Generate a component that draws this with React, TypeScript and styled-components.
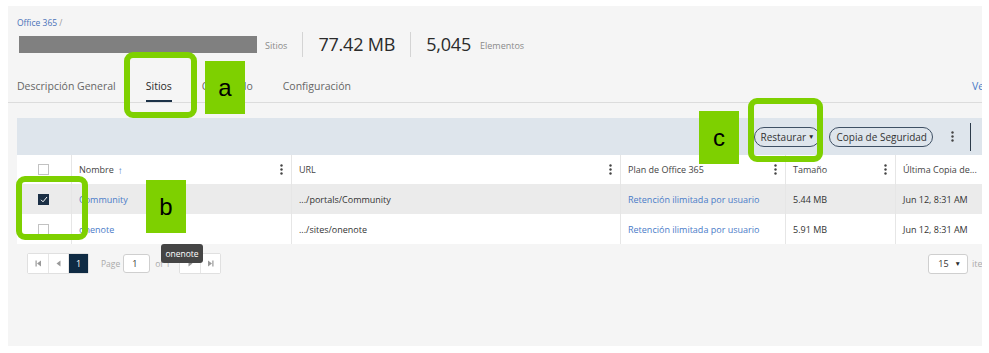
import React from "react";
import styled, { createGlobalStyle } from "styled-components";

const GlobalStyle = createGlobalStyle`
  html, body {
    margin: 0;
    padding: 0;
    background: #ffffff;
  }
  body {
    font-family: "Open Sans", "Noto Sans", Arial, sans-serif;
    color: #333;
  }
  * { box-sizing: border-box; }
`;

const green = "#7ed000";

const Page = styled.div`
  position: relative;
  width: 989px;
  height: 353px;
  padding: 6px 7px 7px 8px;
  overflow: hidden;
`;

const Panel = styled.div`
  height: 100%;
  background: #f5f5f5;
  overflow: hidden;
  padding-left: 9px;
`;

const Content = styled.div`
  width: 1030px;
`;

const Breadcrumb = styled.div`
  margin-top: 11px;
  font-size: 8.5px;
  line-height: 12px;
  color: #999;
  a {
    color: #4a72b8;
    text-decoration: none;
  }
`;

const TitleRow = styled.div`
  display: flex;
  align-items: center;
  height: 26px;
  margin-top: 2px;
`;

const Redacted = styled.div`
  width: 238px;
  height: 17px;
  margin-left: 2px;
  background: #808080;
`;

const SmallLabel = styled.span<{ $gap?: number }>`
  font-size: 9px;
  color: #8a8a8a;
  margin-left: ${(p) => p.$gap ?? 0}px;
  margin-top: 3px;
`;

const Divider = styled.div`
  width: 1px;
  height: 25px;
  background: #d4d4d4;
  margin: 0 15px;
`;

const Stat = styled.span`
  font-size: 18px;
  color: #2b2b2b;
  letter-spacing: -0.2px;
`;

const Tabs = styled.div`
  display: flex;
  align-items: flex-end;
  height: 30px;
  margin-top: 16px;
  border-bottom: 1px solid #dcdcdc;
  margin-left: -9px;
  padding-left: 9px;
`;

const Tab = styled.div<{ $active?: boolean }>`
  font-size: 10.5px;
  color: ${(p) => (p.$active ? "#2b2b2b" : "#666")};
  height: 100%;
  display: flex;
  align-items: center;
  padding-bottom: 1px;
  margin-right: 30px;
  border-bottom: 2px solid ${(p) => (p.$active ? "#1c3147" : "transparent")};
`;

const TabLink = styled.div`
  margin-left: auto;
  font-size: 10.5px;
  color: #4a7bc8;
  height: 100%;
  display: flex;
  align-items: center;
  padding-bottom: 3px;
  width: 75px;
`;

const Grid = styled.div`
  margin-top: 15px;
  width: 980px;
`;

const Toolbar = styled.div`
  display: flex;
  align-items: center;
  justify-content: flex-end;
  height: 37px;
  background: #dee5ec;
  padding-right: 26px;
  gap: 9px;
`;

const PillButton = styled.button`
  height: 20px;
  border: 1px solid #3e5064;
  border-radius: 10px;
  background: transparent;
  font-family: inherit;
  font-size: 10px;
  color: #333;
  padding: 0 5px 0 6px;
  display: flex;
  align-items: center;
  gap: 2px;
  cursor: pointer;
`;

const Caret = styled.span`
  font-size: 6.5px;
  color: #2b2b2b;
`;

const Kebab = styled.svg`
  width: 3px;
  height: 11px;
  flex: none;
`;

const ToolbarKebab = styled.div`
  display: flex;
  margin: 0 7px 0 9px;
`;

const ToolbarSep = styled.div`
  width: 1px;
  height: 28px;
  background: #2b3a4a;
`;

const cols = "55px 220px 329px 165px 110px 101px";

const Row = styled.div<{ $bg: string; $h: number }>`
  display: grid;
  grid-template-columns: ${cols};
  height: ${(p) => p.$h}px;
  background: ${(p) => p.$bg};
`;

const Cell = styled.div<{ $center?: boolean }>`
  display: flex;
  align-items: center;
  justify-content: ${(p) => (p.$center ? "center" : "flex-start")};
  padding: 0 8px 0 7px;
  border-right: 1px solid #e6e6e6;
  font-size: 9px;
  color: #333;
  white-space: nowrap;
  overflow: hidden;
`;

const HeadText = styled.span`
  flex: 1;
  display: flex;
  align-items: center;
  gap: 4px;
  font-size: 9px;
  color: #444;
`;

const SortArrow = styled.span`
  color: #4a7bc8;
  font-size: 10px;
`;

const LinkText = styled.span`
  color: #4a7bc8;
`;

const Box = styled.div<{ $checked?: boolean }>`
  width: 11px;
  height: 11px;
  border: 1px solid ${(p) => (p.$checked ? "#1b2f45" : "#c2c2c2")};
  background: ${(p) => (p.$checked ? "#1b2f45" : "#fff")};
  display: flex;
  align-items: center;
  justify-content: center;
`;

const Pager = styled.div`
  display: flex;
  align-items: center;
  margin-top: 9px;
  padding-left: 10px;
  width: 1020px;
`;

const PagerGroup = styled.div<{ $ml?: number }>`
  display: flex;
  margin-left: ${(p) => p.$ml ?? 0}px;
  border: 1px solid #e0e0e0;
  border-radius: 2px;
  background: #fff;
`;

const PagerBtn = styled.div<{ $active?: boolean }>`
  width: 20px;
  height: 19px;
  display: flex;
  align-items: center;
  justify-content: center;
  font-size: 9px;
  color: ${(p) => (p.$active ? "#fff" : "#999")};
  background: ${(p) => (p.$active ? "#0f2b44" : "#fff")};
  & + & {
    border-left: 1px solid #e6e6e6;
  }
`;

const PagerLabel = styled.span<{ $ml: number }>`
  font-size: 8.5px;
  color: #aaa;
  margin: 0 3px 0 ${(p) => p.$ml}px;
`;

const PageInput = styled.div`
  width: 27px;
  height: 19px;
  border: 1px solid #cfcfcf;
  border-radius: 3px;
  background: #fff;
  font-size: 9px;
  display: flex;
  align-items: center;
  padding-left: 8px;
`;

const SizeSelect = styled.div`
  margin-left: auto;
  width: 40px;
  height: 20px;
  border: 1px solid #cfcfcf;
  border-radius: 3px;
  background: #fff;
  font-size: 9px;
  display: flex;
  align-items: center;
  justify-content: flex-end;
  gap: 6px;
  padding-right: 6px;
`;

const ItemsLabel = styled.span`
  font-size: 9px;
  color: #aaa;
  margin-left: 4px;
  width: 65px;
  white-space: nowrap;
`;

const Tooltip = styled.div`
  position: absolute;
  left: 161px;
  top: 244px;
  width: 42px;
  height: 19px;
  border-radius: 3px;
  background: #454545;
  color: #fff;
  font-size: 8.5px;
  display: flex;
  align-items: center;
  justify-content: center;
`;

const Marker = styled.div<{ $x: number; $y: number }>`
  position: absolute;
  left: ${(p) => p.$x}px;
  top: ${(p) => p.$y}px;
  width: 40px;
  height: 53px;
  background: ${green};
  color: #000;
  font-family: "Liberation Sans", Arial, sans-serif;
  font-size: 24px;
  display: flex;
  align-items: center;
  justify-content: center;
`;

const Outline = styled.div<{ $x: number; $y: number; $w: number; $h: number }>`
  position: absolute;
  left: ${(p) => p.$x}px;
  top: ${(p) => p.$y}px;
  width: ${(p) => p.$w}px;
  height: ${(p) => p.$h}px;
  border: 6px solid ${green};
  border-radius: 9px;
`;

const Dots = () => (
  <Kebab viewBox="0 0 3 11">
    <circle cx="1.5" cy="1.5" r="1.2" fill="#444" />
    <circle cx="1.5" cy="5.5" r="1.2" fill="#444" />
    <circle cx="1.5" cy="9.5" r="1.2" fill="#444" />
  </Kebab>
);

const Check = () => (
  <svg width="8" height="7" viewBox="0 0 8 7">
    <path d="M1 3.8 L3 5.8 L7 1" stroke="#fff" strokeWidth="1" fill="none" />
  </svg>
);

const PagerIcon = ({ kind }: { kind: "first" | "prev" | "next" | "last" }) => (
  <svg width="7" height="7" viewBox="0 0 7 7">
    {kind === "first" && (
      <>
        <rect x="0.5" y="0.5" width="1.2" height="6" fill="#999" />
        <path d="M6 0.5 L2 3.5 L6 6.5 Z" fill="#999" />
      </>
    )}
    {kind === "prev" && <path d="M5.5 0.5 L1.5 3.5 L5.5 6.5 Z" fill="#999" />}
    {kind === "next" && <path d="M1.5 0.5 L5.5 3.5 L1.5 6.5 Z" fill="#999" />}
    {kind === "last" && (
      <>
        <path d="M1 0.5 L5 3.5 L1 6.5 Z" fill="#999" />
        <rect x="5.3" y="0.5" width="1.2" height="6" fill="#999" />
      </>
    )}
  </svg>
);

type Site = { name: string; url: string; size: string; checked: boolean; bg: string };

const sites: Site[] = [
  { name: "Community", url: ".../portals/Community", size: "5.44 MB", checked: true, bg: "#ebebeb" },
  { name: "onenote", url: ".../sites/onenote", size: "5.91 MB", checked: false, bg: "#ffffff" },
];

const headers = ["URL", "Plan de Office 365", "Tamaño"];

export default function App() {
  return (
    <Page>
      <GlobalStyle />
      <Panel>
        <Content>
          <Breadcrumb>
            <a>Office 365</a> /
          </Breadcrumb>
          <TitleRow>
            <Redacted />
            <SmallLabel $gap={8}>Sitios</SmallLabel>
            <Divider />
            <Stat>77.42 MB</Stat>
            <Divider />
            <Stat>5,045</Stat>
            <SmallLabel $gap={9}>Elementos</SmallLabel>
          </TitleRow>
          <Tabs>
            <Tab>Descripción General</Tab>
            <Tab $active>Sitios</Tab>
            <Tab>Contenido</Tab>
            <Tab>Configuración</Tab>
            <TabLink>Ver más</TabLink>
          </Tabs>
          <Grid>
            <Toolbar>
              <PillButton>
                Restaurar<Caret>▼</Caret>
              </PillButton>
              <PillButton>Copia de Seguridad</PillButton>
              <ToolbarKebab>
                <Dots />
              </ToolbarKebab>
              <ToolbarSep />
            </Toolbar>
            <Row $bg="#fff" $h={29}>
              <Cell $center>
                <Box />
              </Cell>
              <Cell>
                <HeadText>
                  Nombre <SortArrow>↑</SortArrow>
                </HeadText>
                <Dots />
              </Cell>
              {headers.map((h) => (
                <Cell key={h}>
                  <HeadText>{h}</HeadText>
                  <Dots />
                </Cell>
              ))}
              <Cell>
                <HeadText>Última Copia de...</HeadText>
              </Cell>
            </Row>
            {sites.map((s) => (
              <Row key={s.name} $bg={s.bg} $h={30}>
                <Cell $center>
                  <Box $checked={s.checked}>{s.checked && <Check />}</Box>
                </Cell>
                <Cell>
                  <LinkText>{s.name}</LinkText>
                </Cell>
                <Cell>{s.url}</Cell>
                <Cell>
                  <LinkText>Retención ilimitada por usuario</LinkText>
                </Cell>
                <Cell>{s.size}</Cell>
                <Cell>Jun 12, 8:31 AM</Cell>
              </Row>
            ))}
          </Grid>
          <Pager>
            <PagerGroup>
              <PagerBtn>
                <PagerIcon kind="first" />
              </PagerBtn>
              <PagerBtn>
                <PagerIcon kind="prev" />
              </PagerBtn>
              <PagerBtn $active>1</PagerBtn>
            </PagerGroup>
            <PagerLabel $ml={12}>Page</PagerLabel>
            <PageInput>1</PageInput>
            <PagerLabel $ml={5}>of 1</PagerLabel>
            <PagerGroup $ml={6}>
              <PagerBtn>
                <PagerIcon kind="next" />
              </PagerBtn>
              <PagerBtn>
                <PagerIcon kind="last" />
              </PagerBtn>
            </PagerGroup>
            <SizeSelect>
              15 <Caret>▼</Caret>
            </SizeSelect>
            <ItemsLabel>items per page</ItemsLabel>
          </Pager>
        </Content>
      </Panel>
      <Tooltip>onenote</Tooltip>
      <Outline $x={124} $y={52} $w={73} $h={66} />
      <Marker $x={205} $y={61}>a</Marker>
      <Outline $x={16} $y={176} $w={72} $h={64} />
      <Marker $x={146} $y={180}>b</Marker>
      <Marker $x={699} $y={111}>c</Marker>
      <Outline $x={748} $y={98} $w={75} $h={64} />
    </Page>
  );
}
